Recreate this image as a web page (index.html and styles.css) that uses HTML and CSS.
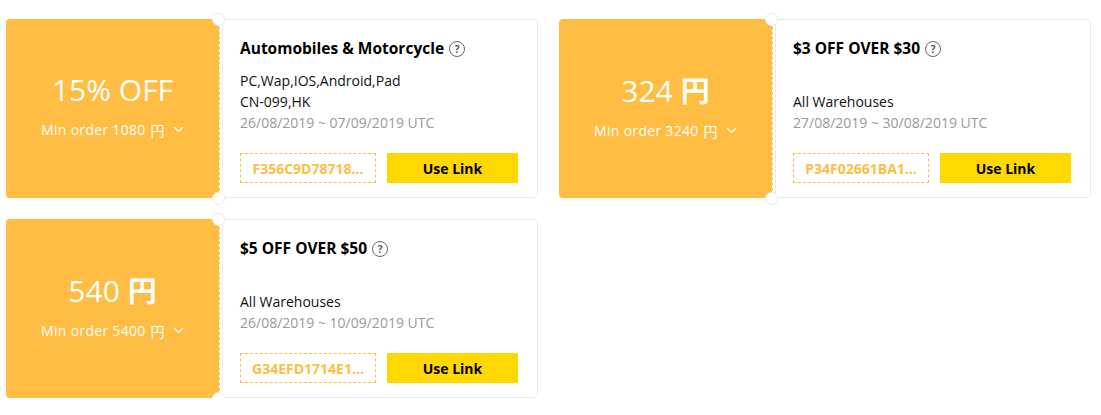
FILE: index.html
```html
<!DOCTYPE html>
<html>
<head>
<meta charset="utf-8">
<link rel="stylesheet" href="styles.css">
</head>
<body>
<div class="grid">
  <div class="coupon">
    <div class="value">
      <div class="amount">15% OFF</div>
      <div class="min">Min order 1080 <span class="yen">円</span><svg class="chev" width="11" height="7" viewBox="0 0 11 7"><path d="M1 1l4.5 4.5 4.5-4.5" fill="none" stroke="#fff" stroke-width="1.2"/></svg></div>
    </div>
    <div class="card">
      <div class="title">Automobiles &amp; Motorcycle <span class="q">?</span></div>
      <div class="line">PC,Wap,IOS,Android,Pad</div>
      <div class="line">CN-099,HK</div>
      <div class="line date">26/08/2019 ~ 07/09/2019 UTC</div>
      <div class="actions">
        <div class="code">F356C9D78718...</div>
        <div class="btn">Use Link</div>
      </div>
    </div>
    <span class="notch top"></span><span class="notch bottom"></span>
  </div>
  <div class="coupon">
    <div class="value">
      <div class="amount">324 <span class="yen-big">円</span></div>
      <div class="min">Min order 3240 <span class="yen">円</span><svg class="chev" width="11" height="7" viewBox="0 0 11 7"><path d="M1 1l4.5 4.5 4.5-4.5" fill="none" stroke="#fff" stroke-width="1.2"/></svg></div>
    </div>
    <div class="card">
      <div class="title">$3 OFF OVER $30 <span class="q">?</span></div>
      <div class="line"></div>
      <div class="line">All Warehouses</div>
      <div class="line date">27/08/2019 ~ 30/08/2019 UTC</div>
      <div class="actions">
        <div class="code">P34F02661BA1...</div>
        <div class="btn">Use Link</div>
      </div>
    </div>
    <span class="notch top"></span><span class="notch bottom"></span>
  </div>
  <div class="coupon">
    <div class="value">
      <div class="amount">540 <span class="yen-big">円</span></div>
      <div class="min">Min order 5400 <span class="yen">円</span><svg class="chev" width="11" height="7" viewBox="0 0 11 7"><path d="M1 1l4.5 4.5 4.5-4.5" fill="none" stroke="#fff" stroke-width="1.2"/></svg></div>
    </div>
    <div class="card">
      <div class="title">$5 OFF OVER $50 <span class="q">?</span></div>
      <div class="line"></div>
      <div class="line">All Warehouses</div>
      <div class="line date">26/08/2019 ~ 10/09/2019 UTC</div>
      <div class="actions">
        <div class="code">G34EFD1714E1...</div>
        <div class="btn">Use Link</div>
      </div>
    </div>
    <span class="notch top"></span><span class="notch bottom"></span>
  </div>
</div>
</body>
</html>
```
FILE: styles.css
```css
* { box-sizing: border-box; }
body {
  margin: 0;
  padding: 19px 0 0 6px;
  background: #fff;
  font-family: "Open Sans", "Noto Sans CJK JP", sans-serif;
  color: #000;
}
.grid {
  display: grid;
  grid-template-columns: 532px 532px;
  column-gap: 21px;
  row-gap: 21px;
}
.coupon {
  position: relative;
  display: flex;
  height: 179px;
}
.value {
  width: 214px;
  flex: none;
  background: #ffbd43;
  border-radius: 4px 0 0 4px;
  border-right: 1px dashed #fff;
  color: #fff;
  display: flex;
  flex-direction: column;
  align-items: center;
  justify-content: center;
  padding-bottom: 8px;
}
.amount {
  font-size: 30px;
  line-height: 40px;
  font-weight: 400;
}
.yen-big {
  font-family: "Noto Sans CJK JP", sans-serif;
  font-weight: 700;
  font-size: 29px;
}
.min {
  margin-top: 10px;
  font-size: 14px;
  letter-spacing: 0.3px;
  line-height: 20px;
  display: flex;
  align-items: center;
}
.yen {
  font-family: "Noto Sans CJK JP", sans-serif;
  font-size: 14px;
  margin-left: 5px;
}
.chev { margin-left: 8px; }
.card {
  flex: 1;
  border: 1px solid #ebebeb;
  border-radius: 0 4px 4px 0;
  padding: 17px 19px 14px 17px;
  margin-left: 2px;
}
.title {
  font-size: 15.5px;
  font-weight: 700;
  line-height: 23px;
  margin-bottom: 10px;
  display: flex;
  align-items: center;
}
.q {
  display: inline-flex;
  align-items: center;
  justify-content: center;
  width: 16px;
  height: 16px;
  margin-left: 5px;
  border: 1.5px solid #666;
  border-radius: 50%;
  color: #555;
  font-size: 10px;
  font-weight: 700;
  line-height: 1;
}
.line {
  font-size: 14px;
  line-height: 21px;
  height: 21px;
  color: #111;
}
.date { color: #999; }
.actions {
  margin-top: 20px;
  display: flex;
  gap: 11px;
}
.code {
  width: 136px;
  height: 30px;
  border: 1px dashed #ffbd43;
  color: #ffbd43;
  font-size: 14px;
  font-weight: 700;
  display: flex;
  align-items: center;
  justify-content: center;
}
.btn {
  width: 131px;
  height: 30px;
  background: #ffd800;
  color: #000;
  font-size: 14px;
  font-weight: 700;
  display: flex;
  align-items: center;
  justify-content: center;
}
.notch {
  position: absolute;
  left: 206px;
  width: 13px;
  height: 13px;
  border-radius: 50%;
  background: #fff;
  border: 1px solid #ebebeb;
}
.notch.top { top: -6px; }
.notch.bottom { bottom: -7px; }
```
